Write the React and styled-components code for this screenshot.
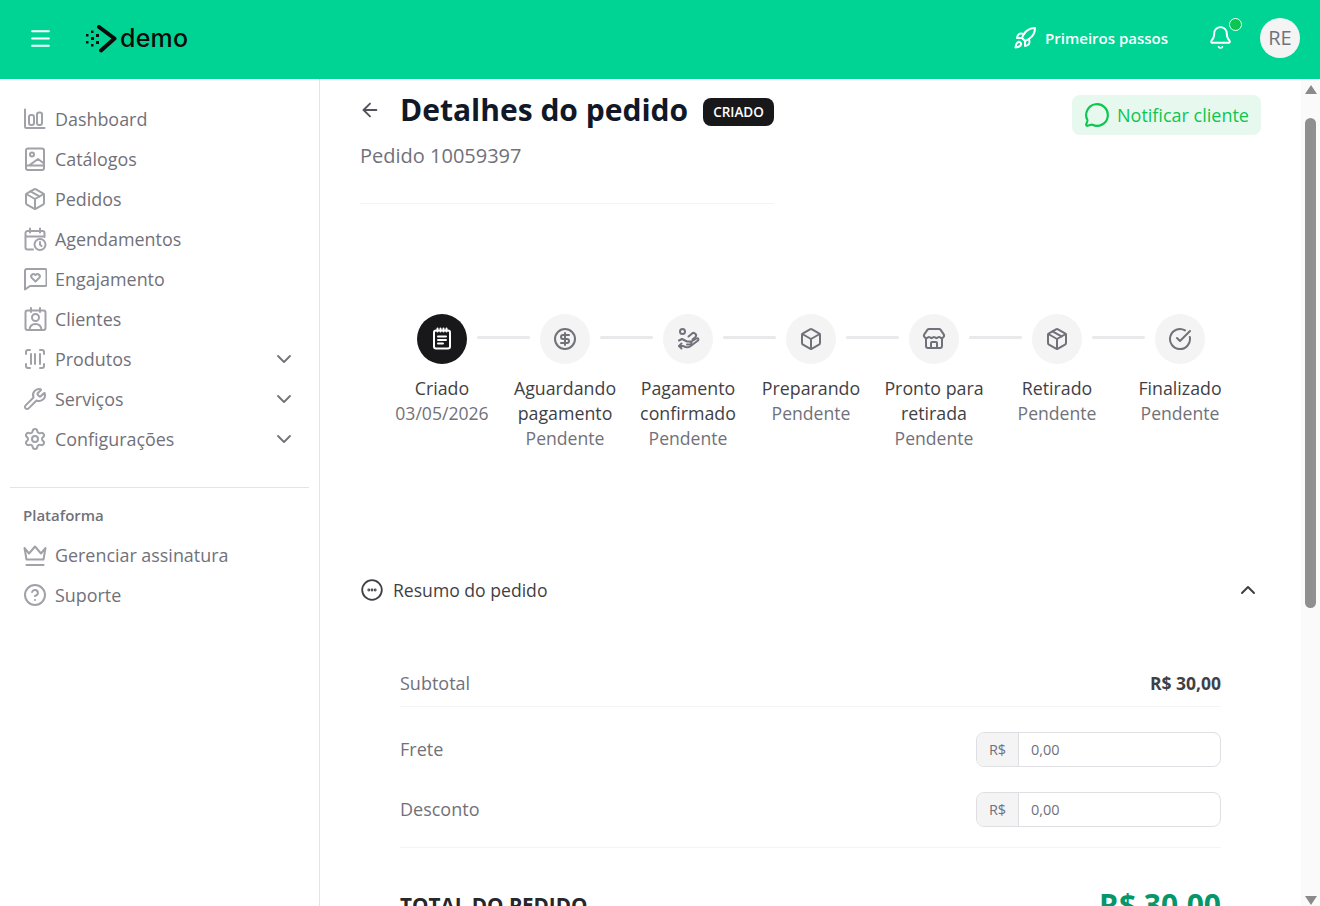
import React from "react";
import styled, { createGlobalStyle } from "styled-components";
import {
	ArrowLeft,
	Bell,
	Box,
	ChevronDown,
	ChevronUp,
	CircleCheckBig,
	CircleDollarSign,
	CircleHelp,
	Menu,
	MessageCircle,
	Package,
	Rocket,
	ScanBarcode,
	Settings,
	Store,
	Wrench,
} from "lucide-react";

const GlobalStyle = createGlobalStyle`
	* {
		box-sizing: border-box;
	}
	html, body {
		margin: 0;
		height: 100%;
		overflow: hidden;
		background: #fff;
		font-family: "Open Sans", "Liberation Sans", sans-serif;
	}
`;

const Page = styled.div`
	width: 1320px;
	height: 906px;
	display: flex;
	flex-direction: column;
	overflow: hidden;
`;

const Header = styled.header`
	height: 79px;
	flex-shrink: 0;
	background: #00d494;
	display: flex;
	align-items: center;
	padding: 0 20px 2px 28px;
	color: #fff;
`;

const Burger = styled.div`
	display: flex;
	margin-right: 32px;
`;

const Logo = styled.div`
	display: flex;
	align-items: center;
	gap: 3px;
	color: #0b0b0b;
`;

const LogoText = styled.span`
	font-family: "Inter", sans-serif;
	font-size: 25px;
	font-weight: 500;
	letter-spacing: 0.2px;
	line-height: 1;
`;

const HeaderRight = styled.div`
	margin-left: auto;
	margin-bottom: 2px;
	display: flex;
	align-items: center;
`;

const StartLink = styled.div`
	display: flex;
	align-items: center;
	gap: 8px;
	font-size: 15px;
	font-weight: 600;
	margin-right: 40px;
`;

const BellWrap = styled.div`
	position: relative;
	display: flex;
	margin-right: 27px;
`;

const BellDot = styled.span`
	position: absolute;
	top: -7px;
	right: -9px;
	width: 13px;
	height: 13px;
	border-radius: 50%;
	background: #0cc650;
	border: 1.5px solid #fff;
`;

const UserBadge = styled.div`
	width: 40px;
	height: 40px;
	border-radius: 50%;
	background: #f4f4f5;
	color: #71717a;
	display: flex;
	align-items: center;
	justify-content: center;
	font-size: 20px;
`;

const Body = styled.div`
	flex: 1;
	min-height: 0;
	display: flex;
`;

const Sidebar = styled.aside`
	width: 320px;
	flex-shrink: 0;
	border-right: 1px solid #e4e4e7;
	padding: 20px 10px;
`;

const NavList = styled.nav`
	display: flex;
	flex-direction: column;
`;

const NavRow = styled.div`
	height: 40px;
	display: flex;
	align-items: center;
	gap: 8px;
	padding: 0 13px;
	font-size: 17.9px;
	color: #71717a;

	svg {
		flex-shrink: 0;
		color: #a1a1aa;
	}
`;

const NavCaret = styled.span`
	margin-left: auto;
	display: flex;
	svg {
		color: #71717a;
	}
`;

const SideDivider = styled.hr`
	border: 0;
	border-top: 1px solid #e4e4e7;
	margin: 28px 0 17px;
`;

const SideTitle = styled.div`
	font-size: 15px;
	font-weight: 600;
	color: #71717a;
	line-height: 20px;
	padding: 0 13px;
	margin-bottom: 10px;
`;

const Main = styled.main`
	flex: 1;
	min-width: 0;
	padding: 16px 40px 0 40px;
	overflow: hidden;
`;

const TopRow = styled.div`
	display: flex;
	justify-content: space-between;
	align-items: flex-start;
`;

const TitleBlock = styled.div`
	width: 414px;
	padding-bottom: 32px;
	border-bottom: 1px solid #f4f4f5;
`;

const TitleRow = styled.div`
	display: flex;
	align-items: center;
	height: 30px;
	color: #52525b;
`;

const BackArrow = styled.span`
	display: flex;
	margin-left: -1px;
`;

const Title = styled.h1`
	margin: 0 15px 0 19px;
	font-size: 30px;
	line-height: 30px;
	font-weight: 700;
	color: #111827;
	white-space: nowrap;
`;

const Badge = styled.span`
	background: #18181b;
	color: #fff;
	border-radius: 8px;
	height: 28px;
	padding: 0 10px 1px;
	display: flex;
	align-items: center;
	font-size: 13.5px;
	font-weight: 600;
	position: relative;
	top: 2px;
`;

const OrderNumber = styled.div`
	margin-top: 16px;
	font-size: 20px;
	line-height: 30px;
	color: #71717a;
`;

const NotifyButton = styled.button`
	height: 40px;
	width: 189px;
	border: 0;
	border-radius: 8px;
	background: #e7f9ee;
	color: #0cc650;
	font-family: inherit;
	font-size: 18px;
	display: flex;
	align-items: center;
	justify-content: center;
	gap: 7px;
	padding: 0;
`;

const Steps = styled.div`
	display: grid;
	grid-template-columns: repeat(7, 123px);
	margin: 110px 0 0 20.5px;
	height: 264px;
`;

const Step = styled.div`
	display: flex;
	flex-direction: column;
	align-items: center;
	text-align: center;
	position: relative;

	&:not(:last-child)::after {
		content: "";
		position: absolute;
		top: 22px;
		left: 96.5px;
		width: 53px;
		height: 3px;
		border-radius: 2px;
		background: #e9e9eb;
	}
`;

const StepCircle = styled.div`
	width: 50px;
	height: 50px;
	border-radius: 50%;
	display: flex;
	align-items: center;
	justify-content: center;
	background: ${(p) => (p.$active ? "#18181b" : "#f4f4f5")};
	color: ${(p) => (p.$active ? "#fff" : "#71717a")};
	margin-bottom: 12px;
`;

const StepName = styled.div`
	font-size: 17.8px;
	line-height: 25px;
	color: #3f3f46;
	padding: 0 8px;
`;

const StepSub = styled.div`
	font-size: 17.6px;
	line-height: 25px;
	color: #71717a;
`;

const SummaryHeader = styled.div`
	display: flex;
	align-items: center;
	gap: 9px;
	height: 24px;
	font-size: 17.6px;
	color: #3f3f46;
	padding-right: 1px;
	svg {
		color: #3f3f46;
	}
`;

const SummaryCaret = styled.span`
	margin-left: auto;
	display: flex;
`;

const SummaryBody = styled.div`
	padding: 67px 40px 0;
`;

const SubtotalRow = styled.div`
	display: flex;
	justify-content: space-between;
	align-items: center;
	height: 38px;
	padding-bottom: 10px;
	border-bottom: 1px solid #f4f4f5;
	font-size: 18px;
	color: #71717a;
`;

const Value = styled.span`
	font-weight: 700;
	font-size: 17.5px;
	color: #3f3f46;
`;

const FieldRow = styled.div`
	display: flex;
	justify-content: space-between;
	align-items: flex-start;
	height: 35px;
	line-height: 34px;
	margin-top: ${(p) => p.$gap}px;
	font-size: 18px;
	color: #71717a;
`;

const MoneyInput = styled.div`
	width: 245px;
	height: 35px;
	border: 1px solid #dfdfe3;
	border-radius: 8px;
	display: flex;
	overflow: hidden;
	font-size: 14.5px;
`;

const Prefix = styled.span`
	width: 42px;
	background: #f4f4f5;
	border-right: 1px solid #dfdfe3;
	display: flex;
	align-items: center;
	justify-content: center;
	color: #71717a;
`;

const InputValue = styled.span`
	flex: 1;
	padding-left: 12px;
	display: flex;
	align-items: center;
	color: #71717a;
`;

const Divider = styled.div`
	border-top: 1px solid #f4f4f5;
	margin-top: 20px;
`;

const TotalRow = styled.div`
	display: flex;
	justify-content: space-between;
	align-items: center;
	margin-top: 34px;
	height: 45px;
	font-weight: 700;
`;

const TotalLabel = styled.span`
	font-size: 20.7px;
	color: #27272a;
`;

const TotalValue = styled.span`
	font-size: 30px;
	color: #059669;
`;

const Scrollbar = styled.div`
	width: 19px;
	flex-shrink: 0;
	background: #fafafa;
	display: flex;
	flex-direction: column;
	align-items: center;
	padding-top: 6px;
`;

const ScrollArrow = styled.div`
	width: 0;
	height: 0;
	border-left: 6px solid transparent;
	border-right: 6px solid transparent;
	${(p) =>
		p.$down
			? "border-top: 9px solid #8a8a8a; margin-top: auto; margin-bottom: 1px;"
			: "border-bottom: 9px solid #8a8a8a;"}
`;

const ScrollThumb = styled.div`
	width: 11px;
	height: 490px;
	margin-top: 24px;
	border-radius: 6px;
	background: #8f8f8f;
`;

const Svg = ({ size = 24, width = 2, children }) => (
	<svg
		width={size}
		height={size}
		viewBox="0 0 24 24"
		fill="none"
		stroke="currentColor"
		strokeWidth={width}
		strokeLinecap="round"
		strokeLinejoin="round"
	>
		{children}
	</svg>
);

const ChartIcon = () => (
	<Svg>
		<path d="M2 2.500v17A1.500 1.500 0 0 0 3.500 21h18" />
		<rect x="6" y="8" width="5" height="10" rx="2" />
		<rect x="14" y="5.500" width="5" height="12.500" rx="2" />
	</Svg>
);

const CatalogIcon = () => (
	<Svg>
		<rect x="3" y="1.500" width="18" height="21.500" rx="2" />
		<circle cx="9" cy="7.500" r="2" />
		<path d="M3 18.500h18M6 18.500l9-6.500 6 4.500" />
	</Svg>
);

const CalendarClockIcon = () => (
	<Svg>
		<path d="M10 22.500H4.500a2 2 0 0 1-2-2V6a2 2 0 0 1 2-2h15a2 2 0 0 1 2 2v4M7 1.500v4M17 1.500v4M2.500 9.500h19" />
		<circle cx="17" cy="17.500" r="5.500" />
		<path d="M17 15v2.500l1.500 1.500" />
	</Svg>
);

const HeartChatIcon = () => (
	<Svg>
		<path d="M2 22.500V4a2 2 0 0 1 2-2h18a1.500 1.500 0 0 1 1.500 1.500v14a1.500 1.500 0 0 1-1.500 1.500H7z" />
		<path d="M12.500 14.500l-3.700-3.600a2.300 2.300 0 0 1 3.300-3.200l.4.4.4-.4a2.300 2.300 0 0 1 3.300 3.200z" />
	</Svg>
);

const ClientIcon = () => (
	<Svg>
		<rect x="2.500" y="3.500" width="20" height="19.500" rx="2" />
		<path d="M8 1v4M17 1v4" />
		<circle cx="12.500" cy="10.500" r="3.500" />
		<path d="M6.500 23c.3-3.600 2.600-6 6-6s5.700 2.400 6 6" />
	</Svg>
);

const CrownIcon = () => (
	<Svg>
		<path d="M1.500 5l4.500 5.500L12 3.500l6 7 4.500-5.500-2 11.500H3.500z" />
		<path d="M3.500 22h17" strokeWidth="2.200" />
	</Svg>
);

const NoteIcon = () => (
	<Svg>
		<rect x="4" y="3.500" width="16" height="18" rx="2" />
		<path d="M7.500 1.500v3M10.500 1.500v3M13.500 1.500v3M16.500 1.500v3M8 9.500h8M8 13h8M8 16.500h5" />
	</Svg>
);

const HandIcon = () => (
	<Svg>
		<circle cx="6.500" cy="4.500" r="2.500" />
		<path d="M3 13.500l3-1.500 5 2.500h3a1.500 1.500 0 0 1 0 3h-3" />
		<path d="M14.500 15l6-3.500c1.500-1 2.500 1 1.500 2L14 19.500c-1.500 1-3 1-4.500.5L7 19H3.500" />
		<path d="M5.500 16.500L3 19l2.500 2.500" />
		<path d="M12.500 9.500l3-2.500a2.500 2.500 0 0 1 4 3l-3 2.500" />
	</Svg>
);

const DotsIcon = () => (
	<Svg width={1.8}>
		<circle cx="12" cy="12" r="9.800" />
		<circle cx="8.800" cy="12" r="0.500" />
		<circle cx="12" cy="12" r="0.500" />
		<circle cx="15.200" cy="12" r="0.500" />
	</Svg>
);

const LogoMark = () => (
	<svg width="32" height="28" viewBox="0 0 32 28" fill="currentColor">
		<rect x="1" y="9" width="2.500" height="2.500" />
		<rect x="1" y="16" width="2.500" height="2.500" />
		<rect x="6" y="5.500" width="2.500" height="2.500" />
		<rect x="6" y="12" width="3" height="3" />
		<rect x="6" y="19" width="2.500" height="2.500" />
		<rect x="11" y="9" width="3" height="3" />
		<rect x="11" y="16" width="3" height="3" />
		<path
			d="M14 2l15.500 11.500L16 25.500"
			fill="none"
			stroke="currentColor"
			strokeWidth="4"
			strokeLinecap="round"
			strokeLinejoin="round"
		/>
	</svg>
);

const menu = [
	{ label: "Dashboard", icon: <ChartIcon /> },
	{ label: "Catálogos", icon: <CatalogIcon /> },
	{ label: "Pedidos", icon: <Package size={24} strokeWidth={2} /> },
	{ label: "Agendamentos", icon: <CalendarClockIcon /> },
	{ label: "Engajamento", icon: <HeartChatIcon /> },
	{ label: "Clientes", icon: <ClientIcon /> },
	{ label: "Produtos", icon: <ScanBarcode size={24} strokeWidth={2} />, caret: true },
	{ label: "Serviços", icon: <Wrench size={24} strokeWidth={2} />, caret: true },
	{ label: "Configurações", icon: <Settings size={24} strokeWidth={2} />, caret: true },
];

const steps = [
	{ name: "Criado", sub: "03/05/2026", icon: <NoteIcon />, active: true },
	{ name: "Aguardando pagamento", sub: "Pendente", icon: <CircleDollarSign size={24} strokeWidth={2} /> },
	{ name: "Pagamento confirmado", sub: "Pendente", icon: <HandIcon /> },
	{ name: "Preparando", sub: "Pendente", icon: <Box size={24} strokeWidth={2} /> },
	{ name: "Pronto para retirada", sub: "Pendente", icon: <Store size={24} strokeWidth={2} /> },
	{ name: "Retirado", sub: "Pendente", icon: <Package size={24} strokeWidth={2} /> },
	{ name: "Finalizado", sub: "Pendente", icon: <CircleCheckBig size={24} strokeWidth={2} /> },
];

const App = () => {
	return (
		<Page>
			<GlobalStyle />
			<Header>
				<Burger>
					<Menu size={25} strokeWidth={2} />
				</Burger>
				<Logo>
					<LogoMark />
					<LogoText>demo</LogoText>
				</Logo>
				<HeaderRight>
					<StartLink>
						<Rocket size={24} strokeWidth={2} />
						Primeiros passos
					</StartLink>
					<BellWrap>
						<Bell size={25} strokeWidth={1.8} />
						<BellDot />
					</BellWrap>
					<UserBadge>RE</UserBadge>
				</HeaderRight>
			</Header>
			<Body>
				<Sidebar>
					<NavList>
						{menu.map((item) => (
							<NavRow key={item.label}>
								{item.icon}
								{item.label}
								{item.caret && (
									<NavCaret>
										<ChevronDown size={24} strokeWidth={1.8} />
									</NavCaret>
								)}
							</NavRow>
						))}
					</NavList>
					<SideDivider />
					<SideTitle>Plataforma</SideTitle>
					<NavList>
						<NavRow>
							<CrownIcon />
							Gerenciar assinatura
						</NavRow>
						<NavRow>
							<CircleHelp size={24} strokeWidth={2} />
							Suporte
						</NavRow>
					</NavList>
				</Sidebar>
				<Main>
					<TopRow>
						<TitleBlock>
							<TitleRow>
								<BackArrow>
									<ArrowLeft size={22} strokeWidth={2} />
								</BackArrow>
								<Title>Detalhes do pedido</Title>
								<Badge>CRIADO</Badge>
							</TitleRow>
							<OrderNumber>Pedido 10059397</OrderNumber>
						</TitleBlock>
						<NotifyButton>
							<MessageCircle size={26} strokeWidth={2} />
							Notificar cliente
						</NotifyButton>
					</TopRow>
					<Steps>
						{steps.map((step) => (
							<Step key={step.name}>
								<StepCircle $active={step.active}>{step.icon}</StepCircle>
								<StepName>{step.name}</StepName>
								<StepSub>{step.sub}</StepSub>
							</Step>
						))}
					</Steps>
					<SummaryHeader>
						<DotsIcon />
						Resumo do pedido
						<SummaryCaret>
							<ChevronUp size={24} strokeWidth={2} />
						</SummaryCaret>
					</SummaryHeader>
					<SummaryBody>
						<SubtotalRow>
							Subtotal
							<Value>R$ 30,00</Value>
						</SubtotalRow>
						<FieldRow $gap={25}>
							Frete
							<MoneyInput>
								<Prefix>R$</Prefix>
								<InputValue>0,00</InputValue>
							</MoneyInput>
						</FieldRow>
						<FieldRow $gap={25}>
							Desconto
							<MoneyInput>
								<Prefix>R$</Prefix>
								<InputValue>0,00</InputValue>
							</MoneyInput>
						</FieldRow>
						<Divider />
						<TotalRow>
							<TotalLabel>TOTAL DO PEDIDO</TotalLabel>
							<TotalValue>R$ 30,00</TotalValue>
						</TotalRow>
					</SummaryBody>
				</Main>
				<Scrollbar>
					<ScrollArrow />
					<ScrollThumb />
					<ScrollArrow $down />
				</Scrollbar>
			</Body>
		</Page>
	);
};

export default App;
